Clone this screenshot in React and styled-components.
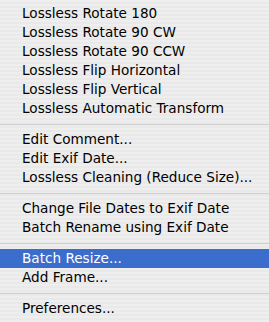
import React from "react";
import styled, { createGlobalStyle } from "styled-components";

const GlobalStyle = createGlobalStyle`
    html, body {
        margin: 0;
        padding: 0;
        background: #ececec;
    }
`

const Menu = styled.ul`
    list-style: none;
    margin: 0;
    padding: 4px 0;
    width: 269px;
    height: 322px;
    box-sizing: border-box;
    background: repeating-linear-gradient(
        to bottom,
        #eeeeee 0px,
        #eeeeee 2px,
        #e9e9e9 2px,
        #e9e9e9 4px
    );
    font-family: "DejaVu Sans", "Liberation Sans", sans-serif;
    font-size: 13.6px;
    color: #000;
    overflow: hidden;
`
const Item = styled.li`
    height: 19px;
    line-height: 19px;
    padding-left: 22px;
    white-space: nowrap;
    background: ${props => props.$selected ? "#3b6dcc" : "transparent"};
    color: ${props => props.$selected ? "#fff" : "#000"};
`
const Separator = styled.li`
    height: 12px;
    display: flex;
    align-items: center;

    &::after {
        content: "";
        flex: 1;
        height: 1px;
        background: #cfcfcf;
    }
`

const groups = [
    ["Lossless Rotate 180", "Lossless Rotate 90 CW", "Lossless Rotate 90 CCW",
     "Lossless Flip Horizontal", "Lossless Flip Vertical", "Lossless Automatic Transform"],
    ["Edit Comment...", "Edit Exif Date...", "Lossless Cleaning (Reduce Size)..."],
    ["Change File Dates to Exif Date", "Batch Rename using Exif Date"],
    ["Batch Resize...", "Add Frame..."],
    ["Preferences..."],
]

export default function App() {
    return (
        <>
            <GlobalStyle />
            <Menu>
                {groups.map((group, i) => (
                    <React.Fragment key={i}>
                        {i > 0 && <Separator />}
                        {group.map(label => (
                            <Item key={label} $selected={label === "Batch Resize..."}>{label}</Item>
                        ))}
                    </React.Fragment>
                ))}
            </Menu>
        </>
    );
}
